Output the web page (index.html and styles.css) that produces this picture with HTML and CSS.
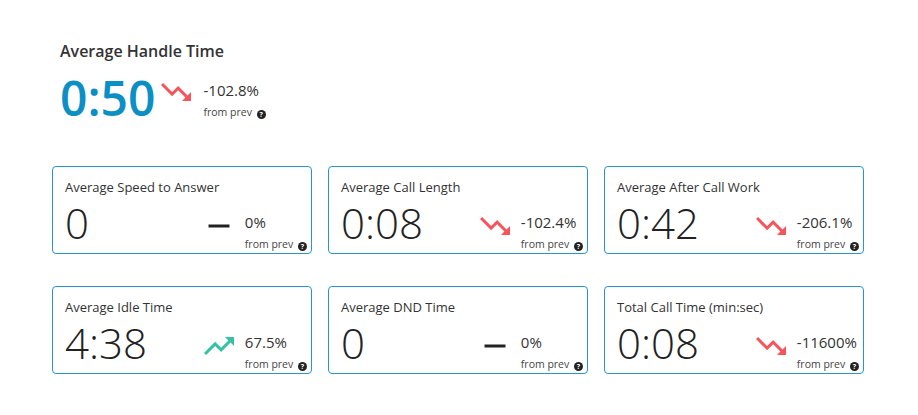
FILE: index.html
```html
<!DOCTYPE html>
<html lang="en">
<head>
    <meta charset="UTF-8">
    <meta name="viewport" content="width=device-width, initial-scale=1.0">
    <title>Call Metrics</title>
    <link rel="stylesheet" href="styles.css">
</head>
<body>
    <div class="page">
        <div class="hero">
            <h2 class="hero-title">Average Handle Time</h2>
            <div class="hero-row">
                <div class="hero-value">0:50</div>
                <div class="trend hero-trend">
                    <svg class="trend-icon down" viewBox="0 0 24 24"><path d="M16 18l2.29-2.29-4.88-4.88-4 4L2 7.41 3.41 6l6 6 4-4 6.3 6.29L22 12v6z"/></svg>
                    <div class="stat">
                        <div class="stat-pct">-102.8%</div>
                        <div class="stat-prev">from prev <span class="help">?</span></div>
                    </div>
                </div>
            </div>
        </div>

        <div class="cards">
            <div class="card">
                <div class="card-title">Average Speed to Answer</div>
                <div class="card-body">
                    <div class="card-value">0</div>
                    <div class="trend">
                        <svg class="trend-icon flat" viewBox="0 0 24 24"><path d="M19 13H5v-2h14v2z"/></svg>
                        <div class="stat">
                            <div class="stat-pct">0%</div>
                            <div class="stat-prev">from prev <span class="help">?</span></div>
                        </div>
                    </div>
                </div>
            </div>
            <div class="card">
                <div class="card-title">Average Call Length</div>
                <div class="card-body">
                    <div class="card-value">0:08</div>
                    <div class="trend">
                        <svg class="trend-icon down" viewBox="0 0 24 24"><path d="M16 18l2.29-2.29-4.88-4.88-4 4L2 7.41 3.41 6l6 6 4-4 6.3 6.29L22 12v6z"/></svg>
                        <div class="stat">
                            <div class="stat-pct">-102.4%</div>
                            <div class="stat-prev">from prev <span class="help">?</span></div>
                        </div>
                    </div>
                </div>
            </div>
            <div class="card">
                <div class="card-title">Average After Call Work</div>
                <div class="card-body">
                    <div class="card-value">0:42</div>
                    <div class="trend">
                        <svg class="trend-icon down" viewBox="0 0 24 24"><path d="M16 18l2.29-2.29-4.88-4.88-4 4L2 7.41 3.41 6l6 6 4-4 6.3 6.29L22 12v6z"/></svg>
                        <div class="stat">
                            <div class="stat-pct">-206.1%</div>
                            <div class="stat-prev">from prev <span class="help">?</span></div>
                        </div>
                    </div>
                </div>
            </div>
            <div class="card">
                <div class="card-title">Average Idle Time</div>
                <div class="card-body">
                    <div class="card-value">4:38</div>
                    <div class="trend">
                        <svg class="trend-icon up" viewBox="0 0 24 24"><path d="M16 6l2.29 2.29-4.88 4.88-4-4L2 16.59 3.41 18l6-6 4 4 6.3-6.29L22 12V6z"/></svg>
                        <div class="stat">
                            <div class="stat-pct">67.5%</div>
                            <div class="stat-prev">from prev <span class="help">?</span></div>
                        </div>
                    </div>
                </div>
            </div>
            <div class="card">
                <div class="card-title">Average DND Time</div>
                <div class="card-body">
                    <div class="card-value">0</div>
                    <div class="trend">
                        <svg class="trend-icon flat" viewBox="0 0 24 24"><path d="M19 13H5v-2h14v2z"/></svg>
                        <div class="stat">
                            <div class="stat-pct">0%</div>
                            <div class="stat-prev">from prev <span class="help">?</span></div>
                        </div>
                    </div>
                </div>
            </div>
            <div class="card">
                <div class="card-title">Total Call Time (min:sec)</div>
                <div class="card-body">
                    <div class="card-value">0:08</div>
                    <div class="trend">
                        <svg class="trend-icon down" viewBox="0 0 24 24"><path d="M16 18l2.29-2.29-4.88-4.88-4 4L2 7.41 3.41 6l6 6 4-4 6.3 6.29L22 12v6z"/></svg>
                        <div class="stat">
                            <div class="stat-pct">-11600%</div>
                            <div class="stat-prev">from prev <span class="help">?</span></div>
                        </div>
                    </div>
                </div>
            </div>
        </div>
    </div>
</body>
</html>
```

FILE: styles.css
```css
* {
    box-sizing: border-box;
    margin: 0;
    padding: 0;
}

body {
    background-color: #fff;
    font-family: 'Open Sans', 'Liberation Sans', sans-serif;
    color: #333;
}

.page {
    padding: 0 52px;
}

.hero {
    padding: 40px 8px 0;
}

.hero-title {
    font-size: 16px;
    line-height: 22px;
    font-weight: 600;
    color: #333;
}

.hero-row {
    display: flex;
    align-items: flex-start;
    gap: 3px;
    margin-top: 6px;
}

.hero-value {
    font-size: 48px;
    line-height: 60px;
    font-weight: 600;
    color: #0b8fc4;
}

.trend {
    display: flex;
    align-items: flex-start;
    gap: 8px;
    margin-left: auto;
}

.hero-trend {
    margin-left: 0;
    gap: 9px;
}

.trend-icon {
    width: 36px;
    height: 36px;
    margin-top: 13px;
}

.hero-trend .trend-icon {
    margin-top: 6px;
}

.trend-icon.down {
    fill: #f5555a;
}

.trend-icon.up {
    fill: #31c3a2;
}

.trend-icon.flat {
    fill: #222;
}

.stat {
    margin-top: 17px;
}

.hero-trend .stat {
    margin-top: 12px;
}

.stat-pct {
    font-size: 15px;
    line-height: 20px;
    color: #333;
}

.stat-prev {
    margin-top: 4px;
    font-size: 10.5px;
    line-height: 16px;
    color: #444;
    white-space: nowrap;
}

.help {
    display: inline-block;
    width: 9px;
    height: 9px;
    margin-left: 2px;
    border-radius: 50%;
    background-color: #222;
    color: #fff;
    font-size: 7px;
    line-height: 9px;
    font-weight: 700;
    text-align: center;
    vertical-align: -1px;
}

.cards {
    display: grid;
    grid-template-columns: repeat(3, 260px);
    column-gap: 16px;
    row-gap: 32px;
    margin-top: 38px;
}

.card {
    border: 1px solid #2596d2;
    border-radius: 4px;
    padding: 12px 4px 1px 12px;
}

.card-title {
    font-size: 13px;
    line-height: 16px;
    color: #333;
}

.card-body {
    display: flex;
    align-items: flex-start;
}

.card-value {
    font-size: 42px;
    line-height: 56px;
    font-weight: 300;
    color: #222;
}
```
